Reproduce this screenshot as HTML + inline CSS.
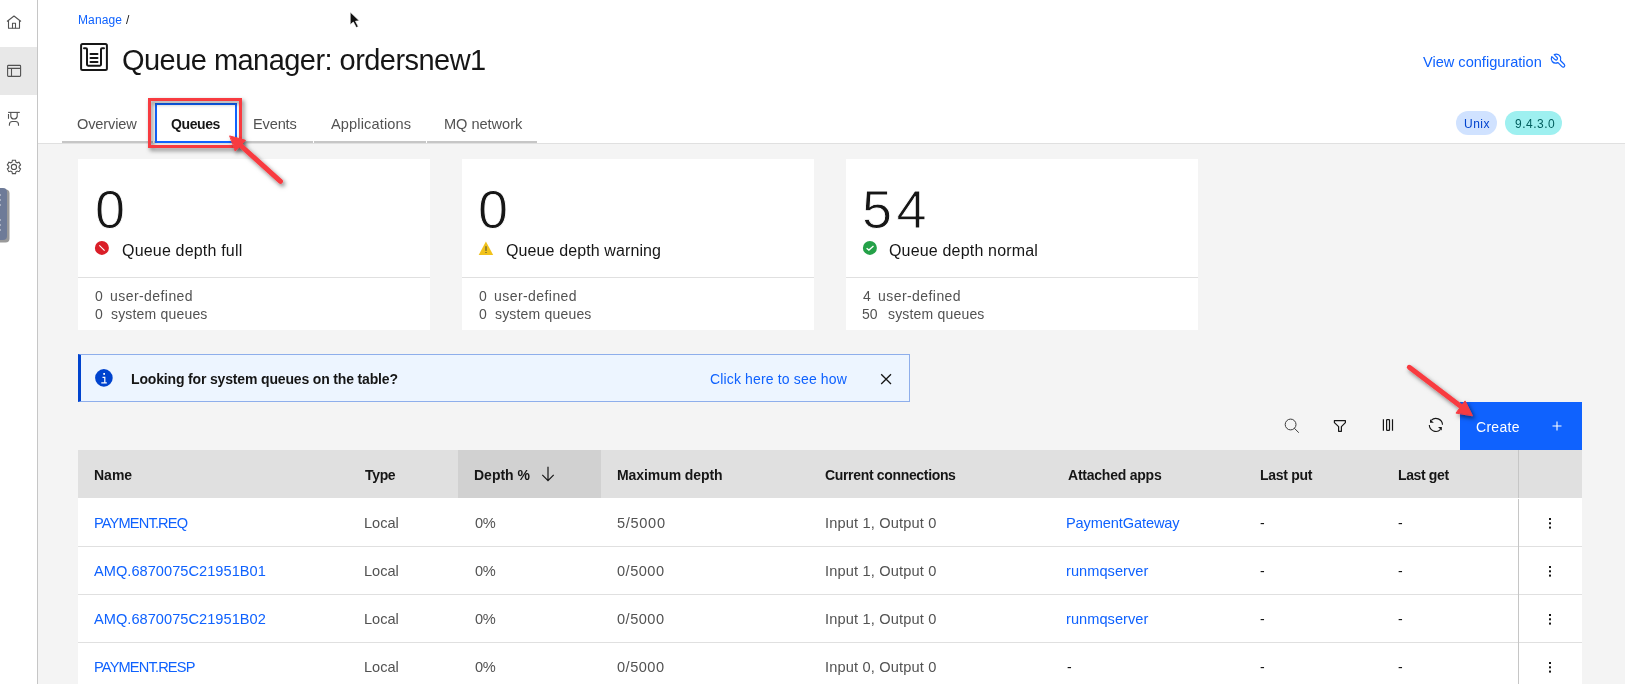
<!DOCTYPE html>
<html><head><meta charset="utf-8">
<style>
*{box-sizing:border-box;margin:0;padding:0}
html,body{width:1625px;height:684px;overflow:hidden}
body{background:#f4f4f4;font-family:"Liberation Sans",sans-serif;color:#161616;position:relative}
.a{position:absolute;white-space:nowrap;will-change:transform}
.r{position:absolute}
</style></head><body>
<div class="r" style="left:0px;top:0px;width:38px;height:684px;background:#fff;border-right:1px solid #c6c6c6"></div>
<div class="r" style="left:0px;top:47px;width:37px;height:48px;background:#e8e8e8;"></div>
<div class="r" style="left:38px;top:0px;width:1587px;height:144px;background:#fff;border-bottom:1px solid #e0e0e0"></div>
<div class="r" style="left:62px;top:141px;width:91px;height:2px;background:#c6c6c6;"></div>
<div class="r" style="left:154px;top:141px;width:83px;height:2px;background:#c6c6c6;"></div>
<div class="r" style="left:238px;top:141px;width:75px;height:2px;background:#c6c6c6;"></div>
<div class="r" style="left:314px;top:141px;width:112px;height:2px;background:#c6c6c6;"></div>
<div class="r" style="left:427px;top:141px;width:110px;height:2px;background:#c6c6c6;"></div>
<div class="r" style="left:1456px;top:111px;width:41px;height:24px;background:#d0e2ff;border-radius:12px"></div>
<div class="r" style="left:1505px;top:111px;width:57px;height:24px;background:#9ef0f0;border-radius:12px"></div>
<div class="r" style="left:78px;top:159px;width:352px;height:171px;background:#fff;"></div>
<div class="r" style="left:78px;top:277px;width:352px;height:1px;background:#e0e0e0;"></div>
<div class="r" style="left:462px;top:159px;width:352px;height:171px;background:#fff;"></div>
<div class="r" style="left:462px;top:277px;width:352px;height:1px;background:#e0e0e0;"></div>
<div class="r" style="left:846px;top:159px;width:352px;height:171px;background:#fff;"></div>
<div class="r" style="left:846px;top:277px;width:352px;height:1px;background:#e0e0e0;"></div>
<div class="r" style="left:78px;top:354px;width:832px;height:48px;background:#edf5ff;border:1px solid #8eaeeb;border-left:3px solid #0043ce"></div>
<div class="r" style="left:1460px;top:402px;width:122px;height:48px;background:#0f62fe;"></div>
<div class="r" style="left:78px;top:450px;width:1504px;height:48px;background:#e0e0e0;"></div>
<div class="r" style="left:458px;top:450px;width:143px;height:48px;background:#d1d1d1;"></div>
<div class="r" style="left:78px;top:498px;width:1504px;height:186px;background:#fff;"></div>
<div class="r" style="left:78px;top:546px;width:1504px;height:1px;background:#e0e0e0;"></div>
<div class="r" style="left:78px;top:594px;width:1504px;height:1px;background:#e0e0e0;"></div>
<div class="r" style="left:78px;top:642px;width:1504px;height:1px;background:#e0e0e0;"></div>
<div class="r" style="left:1518px;top:450px;width:1px;height:48px;background:#c6c6c6;"></div>
<div class="r" style="left:1518px;top:499px;width:1px;height:185px;background:#c6c6c6;"></div>
<div class="a" style="left:78.40px;top:11.64px;font-size:12px;line-height:16px;color:#0f62fe;font-weight:400;letter-spacing:0.120px;">Manage</div>
<div class="a" style="left:126.20px;top:11.64px;font-size:12px;line-height:16px;color:#161616;font-weight:400;">/</div>
<div class="a" style="left:122.00px;top:41.15px;font-size:29px;line-height:38px;color:#161616;font-weight:400;letter-spacing:-0.542px;">Queue manager: ordersnew1</div>
<div class="a" style="left:77.20px;top:114.54px;font-size:14.6px;line-height:19px;color:#525252;font-weight:400;letter-spacing:-0.143px;">Overview</div>
<div class="a" style="left:171.20px;top:114.65px;font-size:14px;line-height:18px;color:#161616;font-weight:700;letter-spacing:-0.400px;">Queues</div>
<div class="a" style="left:253.20px;top:114.54px;font-size:14.6px;line-height:19px;color:#525252;font-weight:400;letter-spacing:-0.160px;">Events</div>
<div class="a" style="left:331.00px;top:114.54px;font-size:14.6px;line-height:19px;color:#525252;font-weight:400;letter-spacing:0.127px;">Applications</div>
<div class="a" style="left:443.60px;top:114.54px;font-size:14.6px;line-height:19px;color:#525252;font-weight:400;letter-spacing:-0.044px;">MQ network</div>
<div class="a" style="left:1423.00px;top:52.94px;font-size:14.6px;line-height:19px;color:#0f62fe;font-weight:400;letter-spacing:-0.012px;">View configuration</div>
<div class="a" style="left:1464.20px;top:115.74px;font-size:12px;line-height:16px;color:#0043ce;font-weight:400;letter-spacing:0.467px;">Unix</div>
<div class="a" style="left:1514.80px;top:115.74px;font-size:12px;line-height:16px;color:#005d5d;font-weight:400;letter-spacing:0.500px;">9.4.3.0</div>
<div class="a" style="left:94.60px;top:179.29px;font-size:54px;line-height:60px;color:#161616;font-weight:400;-webkit-text-stroke:0.9px #fff">0</div>
<div class="a" style="left:122.00px;top:239.96px;font-size:16px;line-height:21px;color:#161616;font-weight:400;letter-spacing:0.187px;">Queue depth full</div>
<div class="a" style="left:95.40px;top:287.15px;font-size:14px;line-height:18px;color:#525252;font-weight:400;">0</div>
<div class="a" style="left:110.00px;top:287.15px;font-size:14px;line-height:18px;color:#525252;font-weight:400;letter-spacing:0.436px;">user-defined</div>
<div class="a" style="left:95.40px;top:304.65px;font-size:14px;line-height:18px;color:#525252;font-weight:400;">0</div>
<div class="a" style="left:111.00px;top:304.65px;font-size:14px;line-height:18px;color:#525252;font-weight:400;letter-spacing:0.183px;">system queues</div>
<div class="a" style="left:478.00px;top:179.29px;font-size:54px;line-height:60px;color:#161616;font-weight:400;-webkit-text-stroke:0.9px #fff">0</div>
<div class="a" style="left:506.00px;top:239.96px;font-size:16px;line-height:21px;color:#161616;font-weight:400;letter-spacing:0.111px;">Queue depth warning</div>
<div class="a" style="left:479.40px;top:287.15px;font-size:14px;line-height:18px;color:#525252;font-weight:400;">0</div>
<div class="a" style="left:494.00px;top:287.15px;font-size:14px;line-height:18px;color:#525252;font-weight:400;letter-spacing:0.436px;">user-defined</div>
<div class="a" style="left:479.40px;top:304.65px;font-size:14px;line-height:18px;color:#525252;font-weight:400;">0</div>
<div class="a" style="left:495.00px;top:304.65px;font-size:14px;line-height:18px;color:#525252;font-weight:400;letter-spacing:0.183px;">system queues</div>
<div class="a" style="left:862.00px;top:179.29px;font-size:54px;line-height:60px;color:#161616;font-weight:400;letter-spacing:4.400px;-webkit-text-stroke:0.9px #fff">54</div>
<div class="a" style="left:889.20px;top:239.96px;font-size:16px;line-height:21px;color:#161616;font-weight:400;letter-spacing:0.176px;">Queue depth normal</div>
<div class="a" style="left:863.40px;top:287.15px;font-size:14px;line-height:18px;color:#525252;font-weight:400;">4</div>
<div class="a" style="left:878.00px;top:287.15px;font-size:14px;line-height:18px;color:#525252;font-weight:400;letter-spacing:0.436px;">user-defined</div>
<div class="a" style="left:862.40px;top:304.65px;font-size:14px;line-height:18px;color:#525252;font-weight:400;">50</div>
<div class="a" style="left:887.80px;top:304.65px;font-size:14px;line-height:18px;color:#525252;font-weight:400;letter-spacing:0.183px;">system queues</div>
<div class="a" style="left:130.80px;top:370.15px;font-size:14px;line-height:18px;color:#161616;font-weight:700;letter-spacing:-0.158px;">Looking for system queues on the table?</div>
<div class="a" style="left:709.80px;top:370.15px;font-size:14px;line-height:18px;color:#0f62fe;font-weight:400;letter-spacing:0.150px;">Click here to see how</div>
<div class="a" style="left:1475.60px;top:418.05px;font-size:14px;line-height:18px;color:#ffffff;font-weight:400;letter-spacing:0.280px;">Create</div>
<div class="a" style="left:94.40px;top:466.15px;font-size:14px;line-height:18px;color:#161616;font-weight:700;">Name</div>
<div class="a" style="left:365.20px;top:466.15px;font-size:14px;line-height:18px;color:#161616;font-weight:700;letter-spacing:-0.333px;">Type</div>
<div class="a" style="left:474.40px;top:466.15px;font-size:14px;line-height:18px;color:#161616;font-weight:700;">Depth %</div>
<div class="a" style="left:616.60px;top:466.15px;font-size:14px;line-height:18px;color:#161616;font-weight:700;letter-spacing:-0.083px;">Maximum depth</div>
<div class="a" style="left:825.20px;top:466.15px;font-size:14px;line-height:18px;color:#161616;font-weight:700;letter-spacing:-0.333px;">Current connections</div>
<div class="a" style="left:1067.80px;top:466.15px;font-size:14px;line-height:18px;color:#161616;font-weight:700;letter-spacing:-0.233px;">Attached apps</div>
<div class="a" style="left:1260.20px;top:466.15px;font-size:14px;line-height:18px;color:#161616;font-weight:700;letter-spacing:-0.286px;">Last put</div>
<div class="a" style="left:1398.00px;top:466.15px;font-size:14px;line-height:18px;color:#161616;font-weight:700;letter-spacing:-0.371px;">Last get</div>
<div class="a" style="left:93.60px;top:513.74px;font-size:14.6px;line-height:19px;color:#0f62fe;font-weight:400;letter-spacing:-0.840px;">PAYMENT.REQ</div>
<div class="a" style="left:364.40px;top:513.74px;font-size:14.6px;line-height:19px;color:#525252;font-weight:400;letter-spacing:-0.050px;">Local</div>
<div class="a" style="left:474.80px;top:513.74px;font-size:14.6px;line-height:19px;color:#525252;font-weight:400;letter-spacing:-0.400px;">0%</div>
<div class="a" style="left:616.60px;top:513.74px;font-size:14.6px;line-height:19px;color:#525252;font-weight:400;letter-spacing:0.680px;">5/5000</div>
<div class="a" style="left:824.60px;top:513.74px;font-size:14.6px;line-height:19px;color:#525252;font-weight:400;letter-spacing:0.162px;">Input 1, Output 0</div>
<div class="a" style="left:1066.40px;top:513.74px;font-size:14.6px;line-height:19px;color:#0f62fe;font-weight:400;letter-spacing:-0.123px;">PaymentGateway</div>
<div class="a" style="left:1260.00px;top:513.85px;font-size:14px;line-height:18px;color:#161616;font-weight:400;">-</div>
<div class="a" style="left:1398.00px;top:513.85px;font-size:14px;line-height:18px;color:#161616;font-weight:400;">-</div>
<div class="a" style="left:94.00px;top:561.74px;font-size:14.6px;line-height:19px;color:#0f62fe;font-weight:400;letter-spacing:0.032px;">AMQ.6870075C21951B01</div>
<div class="a" style="left:364.40px;top:561.74px;font-size:14.6px;line-height:19px;color:#525252;font-weight:400;letter-spacing:-0.050px;">Local</div>
<div class="a" style="left:474.80px;top:561.74px;font-size:14.6px;line-height:19px;color:#525252;font-weight:400;letter-spacing:-0.400px;">0%</div>
<div class="a" style="left:617.00px;top:561.74px;font-size:14.6px;line-height:19px;color:#525252;font-weight:400;letter-spacing:0.480px;">0/5000</div>
<div class="a" style="left:824.60px;top:561.74px;font-size:14.6px;line-height:19px;color:#525252;font-weight:400;letter-spacing:0.162px;">Input 1, Output 0</div>
<div class="a" style="left:1066.40px;top:561.74px;font-size:14.6px;line-height:19px;color:#0f62fe;font-weight:400;letter-spacing:0.040px;">runmqserver</div>
<div class="a" style="left:1260.00px;top:561.85px;font-size:14px;line-height:18px;color:#161616;font-weight:400;">-</div>
<div class="a" style="left:1398.00px;top:561.85px;font-size:14px;line-height:18px;color:#161616;font-weight:400;">-</div>
<div class="a" style="left:94.00px;top:609.74px;font-size:14.6px;line-height:19px;color:#0f62fe;font-weight:400;letter-spacing:0.032px;">AMQ.6870075C21951B02</div>
<div class="a" style="left:364.40px;top:609.74px;font-size:14.6px;line-height:19px;color:#525252;font-weight:400;letter-spacing:-0.050px;">Local</div>
<div class="a" style="left:474.80px;top:609.74px;font-size:14.6px;line-height:19px;color:#525252;font-weight:400;letter-spacing:-0.400px;">0%</div>
<div class="a" style="left:617.00px;top:609.74px;font-size:14.6px;line-height:19px;color:#525252;font-weight:400;letter-spacing:0.480px;">0/5000</div>
<div class="a" style="left:824.60px;top:609.74px;font-size:14.6px;line-height:19px;color:#525252;font-weight:400;letter-spacing:0.162px;">Input 1, Output 0</div>
<div class="a" style="left:1066.40px;top:609.74px;font-size:14.6px;line-height:19px;color:#0f62fe;font-weight:400;letter-spacing:0.040px;">runmqserver</div>
<div class="a" style="left:1260.00px;top:609.85px;font-size:14px;line-height:18px;color:#161616;font-weight:400;">-</div>
<div class="a" style="left:1398.00px;top:609.85px;font-size:14px;line-height:18px;color:#161616;font-weight:400;">-</div>
<div class="a" style="left:93.60px;top:657.74px;font-size:14.6px;line-height:19px;color:#0f62fe;font-weight:400;letter-spacing:-0.836px;">PAYMENT.RESP</div>
<div class="a" style="left:364.40px;top:657.74px;font-size:14.6px;line-height:19px;color:#525252;font-weight:400;letter-spacing:-0.050px;">Local</div>
<div class="a" style="left:474.80px;top:657.74px;font-size:14.6px;line-height:19px;color:#525252;font-weight:400;letter-spacing:-0.400px;">0%</div>
<div class="a" style="left:617.00px;top:657.74px;font-size:14.6px;line-height:19px;color:#525252;font-weight:400;letter-spacing:0.480px;">0/5000</div>
<div class="a" style="left:824.60px;top:657.74px;font-size:14.6px;line-height:19px;color:#525252;font-weight:400;letter-spacing:0.162px;">Input 0, Output 0</div>
<div class="a" style="left:1067.00px;top:657.85px;font-size:14px;line-height:18px;color:#161616;font-weight:400;">-</div>
<div class="a" style="left:1260.00px;top:657.85px;font-size:14px;line-height:18px;color:#161616;font-weight:400;">-</div>
<div class="a" style="left:1398.00px;top:657.85px;font-size:14px;line-height:18px;color:#161616;font-weight:400;">-</div>
<svg class="r" style="left:0;top:0" width="1625" height="684" viewBox="0 0 1625 684"><defs>
<filter id="sh" x="-30%" y="-30%" width="160%" height="160%"><feDropShadow dx="2" dy="2.5" stdDeviation="2" flood-color="#000" flood-opacity="0.5"/></filter>
</defs><g fill="none" stroke="#525252" stroke-width="1.1" stroke-linejoin="round"><path d="M7 21.5 L14 16 L21 21.5"/><path d="M8.5 20.5 V28.3 H19.5 V20.5"/><path d="M12.5 28.3 V23.3 H15.5 V28.3"/><rect x="7.6" y="65.4" width="13" height="11" rx="0.8"/><path d="M7.6 68.4 H20.6 M11.5 68.4 V76.4"/><path d="M8.1 112.4 H19.8"/><path d="M8.5 114 V118.8"/><path d="M10.8 112.4 V116.5 A3.3 3.3 0 0 0 17.2 116.5 V112.4"/><path d="M9.4 125.8 V124.5 A3 3 0 0 1 12.4 121.5 H15.5 A3 3 0 0 1 18.5 124.5 V125.8"/></g><g fill="none" stroke="#525252" stroke-width="1.1"><path d="M12.00 162.13 L12.40 160.23 L15.50 160.23 L15.90 162.13 L17.15 162.85 L19.00 162.24 L20.55 164.93 L19.10 166.23 L19.10 167.67 L20.55 168.97 L19.00 171.66 L17.15 171.05 L15.90 171.77 L15.50 173.67 L12.40 173.67 L12.00 171.77 L10.75 171.05 L8.90 171.66 L7.35 168.97 L8.80 167.67 L8.80 166.23 L7.35 164.93 L8.90 162.24 L10.75 162.85 Z"/><circle cx="13.95" cy="166.95" r="2.6"/></g><path d="M-4 188 H4 Q8 188 8 192 V237 Q8 241 4 241 H-4 Z" fill="#9a9a9a" transform="translate(1.5,1.5)"/><path d="M-4 188 H3 Q7 188 7 192 V236 Q7 240 3 240 H-4 Z" fill="#6e7b98"/><rect x="0" y="194.5" width="1" height="1" fill="#dfe3ea"/><rect x="0" y="199.5" width="1" height="1" fill="#dfe3ea"/><rect x="0" y="204.5" width="1" height="1" fill="#dfe3ea"/><rect x="0" y="219.5" width="1" height="1" fill="#dfe3ea"/><rect x="0" y="224.5" width="1" height="1" fill="#dfe3ea"/><rect x="0" y="229.5" width="1" height="1" fill="#dfe3ea"/><g fill="none" stroke="#161616" stroke-width="2" stroke-linecap="round" stroke-linejoin="round"><rect x="81.1" y="43.9" width="25.8" height="26" rx="1.5"/><path d="M84 48.2 H85.9 Q87 48.2 87 49.3 V64.6 Q87 65.7 88.1 65.7 H99.9 Q101 65.7 101 64.6 V49.3 Q101 48.2 102.1 48.2 H104"/><path d="M90.5 54 H97.5 M90.5 58 H97.5 M90.5 62 H97.5"/></g><path d="M1551.8 56.6 L1555 59.6 Q1556.3 60.5 1557.2 59.4 Q1558 58.3 1556.9 57.3 L1554.2 54.6 Q1558.4 53.2 1560.3 56.6 Q1561.2 58.6 1560.4 60.5 L1564.4 64.5 Q1565.3 65.7 1564.2 66.7 Q1563 67.6 1562 66.6 L1558 62.6 Q1554.4 64.1 1552.2 61.5 Q1550.5 59.3 1551.8 56.6 Z" fill="none" stroke="#0f62fe" stroke-width="1.2" stroke-linejoin="round"/><circle cx="101.9" cy="247.9" r="7" fill="#da1e28"/><path d="M99.3 245.3 L104.6 250.6" stroke="#fff" stroke-width="1.1"/><path d="M485.9 241.5 L493.2 254.9 H478.7 Z" fill="#f1c21b"/><rect x="485.2" y="246.2" width="1.6" height="4.7" fill="#85752a"/><rect x="485.2" y="252" width="1.6" height="1" fill="#85752a"/><circle cx="869.9" cy="247.9" r="7" fill="#24a148"/><path d="M866.6 248.2 L868.9 250.1 L873.5 246" fill="none" stroke="#fff" stroke-width="1.3"/><circle cx="103.9" cy="377.9" r="8.8" fill="#0043ce"/><rect x="103.3" y="373" width="1.7" height="1.8" fill="#fff"/><path d="M102.5 377.3 H104.8 V382.6 M101.3 382.8 H106.8" fill="none" stroke="#fff" stroke-width="1.2"/><path d="M881.2 374.2 L891 384 M891 374.2 L881.2 384" stroke="#161616" stroke-width="1.3"/><g fill="none" stroke="#3a3a3a" stroke-width="1"><circle cx="1290.6" cy="424.5" r="5.4"/><path d="M1294.2 428.1 L1298.8 432.7"/></g><g fill="none" stroke="#161616" stroke-width="1.2" stroke-linejoin="round"><path d="M1334.4 420.6 H1345.4 V422.6 L1341.4 426.6 V431.3 H1338.6 V426.6 L1334.4 422.6 Z"/></g><g fill="none" stroke="#161616" stroke-width="1.2"><path d="M1383.4 419.3 V430.7 M1392.5 419.3 V430.7"/><rect x="1386.6" y="419.6" width="2.9" height="10.8" rx="0.6"/></g><g fill="none" stroke="#161616" stroke-width="1.1"><path d="M1431.2 420.4 A6.6 6.6 0 0 1 1442.5 424.8"/><path d="M1440.6 429.4 A6.6 6.6 0 0 1 1429.3 425"/></g><path d="M1430 419.2 V422.8 H1433.8 Z" fill="#161616"/><path d="M1441.8 430.6 V427 H1438 Z" fill="#161616"/><path d="M1557 421.5 V430.5 M1552.5 426 H1561.5" stroke="#fff" stroke-width="1.1"/><g fill="none" stroke="#161616" stroke-width="1.2"><path d="M548 466.7 V480.6 M542.3 474.9 L548 480.6 L553.7 474.9"/></g><rect x="1549" y="518.0" width="2" height="2" fill="#161616"/><rect x="1549" y="522.3" width="2" height="2" fill="#161616"/><rect x="1549" y="526.6" width="2" height="2" fill="#161616"/><rect x="1549" y="566.0" width="2" height="2" fill="#161616"/><rect x="1549" y="570.3" width="2" height="2" fill="#161616"/><rect x="1549" y="574.6" width="2" height="2" fill="#161616"/><rect x="1549" y="614.0" width="2" height="2" fill="#161616"/><rect x="1549" y="618.3" width="2" height="2" fill="#161616"/><rect x="1549" y="622.6" width="2" height="2" fill="#161616"/><rect x="1549" y="662.0" width="2" height="2" fill="#161616"/><rect x="1549" y="666.3" width="2" height="2" fill="#161616"/><rect x="1549" y="670.6" width="2" height="2" fill="#161616"/><rect x="156" y="104" width="80" height="38" fill="none" stroke="#0f62fe" stroke-width="2"/><g filter="url(#sh)"><rect x="149.5" y="99.5" width="91" height="47" fill="none" stroke="#f83b41" stroke-width="3"/></g><g filter="url(#sh)" fill="#f83b41" stroke="#f83b41" stroke-linecap="round" stroke-linejoin="round"><path d="M280.5 181.3 L239 144" stroke-width="5"/><path d="M230 136 L245.5 140.3 L235.5 150.8 Z" stroke-width="1"/></g><g filter="url(#sh)" fill="#f83b41" stroke="#f83b41" stroke-linecap="round" stroke-linejoin="round"><path d="M1409.3 367.3 L1463 408" stroke-width="5"/><path d="M1472.3 415.4 L1465.1 400.9 L1456.2 412.8 Z" stroke-width="1"/></g><path d="M350.2 12 V24.8 L353.3 22 L356.3 27.6 L358.3 26.6 L355.5 21.2 L359.3 20.8 Z" fill="#111" stroke="#fff" stroke-width="0.7"/></svg>
</body></html>
